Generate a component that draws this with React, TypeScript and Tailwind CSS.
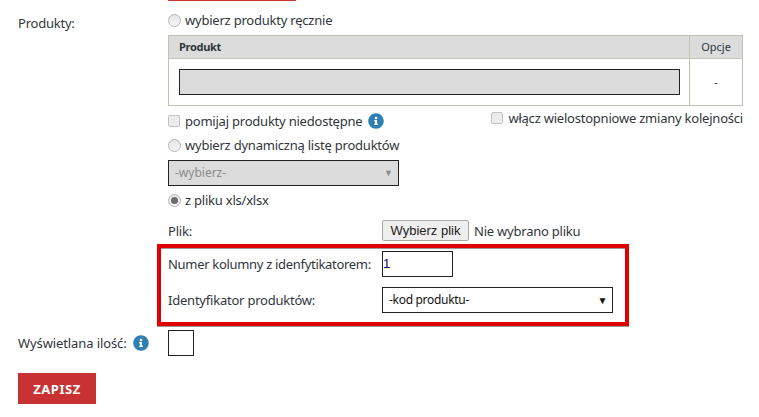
import { FaInfoCircle } from 'react-icons/fa';

function Radio({ checked = false }: { checked?: boolean }) {
    return (
        <span className="w-[13px] h-[13px] shrink-0 rounded-full border border-[#b5b5b5] bg-gradient-to-b from-[#e4e4e4] to-[#f6f6f6] flex items-center justify-center">
            {checked ? <span className="w-[7px] h-[7px] rounded-full bg-[#6b6b6b]"></span> : null}
        </span>
    );
}

function Check() {
    return <span className="w-[12px] h-[12px] shrink-0 rounded-[2px] border border-[#c4c4c4] bg-[#ececec]"></span>;
}

export default function App() {
    return (
        <div className="w-[759px] h-[417px] overflow-hidden bg-white pl-[18px] text-[13px] leading-[16px] tracking-[-0.22px] text-[#30363c] font-['Noto_Sans',sans-serif]">
            <div className="ml-[150px] w-[128px] h-px bg-[#c83232]"></div>

            <div className="flex">
                <div className="w-[150px] pt-[14px] shrink-0">Produkty:</div>
                <div className="w-[575px] pt-[11px]">
                    <div className="flex items-center gap-[4px] h-[16px]">
                        <Radio />
                        <span>wybierz produkty ręcznie</span>
                    </div>

                    <div className="mt-[7px] border border-[#c5c1b5]">
                        <div className="flex h-[23px] bg-[#dcdcdc] border-b border-[#c5c1b5] text-[11px] font-bold items-center">
                            <div className="flex-1 pl-[10px] tracking-[-0.3px]">Produkt</div>
                            <div className="w-[53px] h-full border-l border-[#c5c1b5] flex items-center justify-center font-normal tracking-normal">Opcje</div>
                        </div>
                        <div className="flex h-[46px]">
                            <div className="flex-1 pl-[10px] pr-[9px] pt-[10px]">
                                <div className="h-[26px] bg-[#dcdcdc] border border-[#222]"></div>
                            </div>
                            <div className="w-[53px] border-l border-[#c5c1b5] flex items-center justify-center text-[11px]">-</div>
                        </div>
                    </div>

                    <div className="flex justify-between mt-[4px] h-[16px]">
                        <div className="flex items-center gap-[5px] mt-[3px] h-[16px]">
                            <Check />
                            <span>pomijaj produkty niedostępne</span>
                            <FaInfoCircle className="ml-[1px] text-[16px] text-[#2f7fb0]" />
                        </div>
                        <div className="flex items-center gap-[5px] h-[16px]">
                            <Check />
                            <span>włącz wielostopniowe zmiany kolejności</span>
                        </div>
                    </div>

                    <div className="flex items-center gap-[4px] h-[16px] mt-[11px]">
                        <Radio />
                        <span>wybierz dynamiczną listę produktów</span>
                    </div>

                    <div className="mt-[7px] w-[231px] h-[26px] bg-[#dcdcdc] border border-[#222] flex items-center justify-between pl-[6px] pr-[5px] text-[12px] tracking-normal text-[#8a8a8a]">
                        <span>-wybierz-</span>
                        <span className="text-[9px]">▼</span>
                    </div>

                    <div className="flex items-center gap-[4px] h-[16px] mt-[6px]">
                        <Radio checked />
                        <span>z pliku xls/xlsx</span>
                    </div>

                    <div className="flex items-center h-[21px] mt-[12px]">
                        <span className="w-[214px]">Plik:</span>
                        <span className="w-[87px] h-[21px] bg-[#efefef] border border-[#a8a8a8] rounded-[2px] flex items-center justify-center text-[13px] tracking-normal font-['Liberation_Sans',sans-serif] text-[#222]">Wybierz plik</span>
                        <span className="ml-[5px]">Nie wybrano pliku</span>
                    </div>

                    <div className="-ml-[11px] mt-[3px] w-[472px] h-[82px] border-[4px] border-[#e00000] shadow-[0_1px_0_#999,inset_0_1px_0_#999] pl-[7px] pt-[3px]">
                        <div className="flex items-center h-[26px]">
                            <span className="w-[214px] tracking-[-0.31px]">Numer kolumny z idenfytikatorem:</span>
                            <div className="w-[71px] h-[26px] border border-[#222] flex items-center text-[13px] font-['Liberation_Sans',sans-serif] text-[#00006e]">1</div>
                        </div>
                        <div className="flex items-center h-[26px] mt-[10px]">
                            <span className="w-[214px]">Identyfikator produktów:</span>
                            <div className="w-[231px] h-[26px] border border-[#222] flex items-center justify-between pl-[6px] pr-[5px] text-[12px] tracking-[-0.3px] text-[#111]">
                                <span>-kod produktu-</span>
                                <span className="text-[10px]">▼</span>
                            </div>
                        </div>
                    </div>
                </div>
            </div>

            <div className="flex items-center h-[26px] mt-[4px]">
                <div className="w-[150px] flex items-center gap-[6px]">
                    <span className="tracking-[-0.1px]">Wyświetlana ilość:</span>
                    <FaInfoCircle className="text-[16px] text-[#2f7fb0]" />
                </div>
                <div className="w-[26px] h-[26px] border border-[#222]"></div>
            </div>

            <div className="mt-[17px] w-[78px] h-[31px] bg-[#c83232] flex items-center justify-center text-white font-bold text-[13px] tracking-[0.5px]">ZAPISZ</div>
        </div>
    );
}
